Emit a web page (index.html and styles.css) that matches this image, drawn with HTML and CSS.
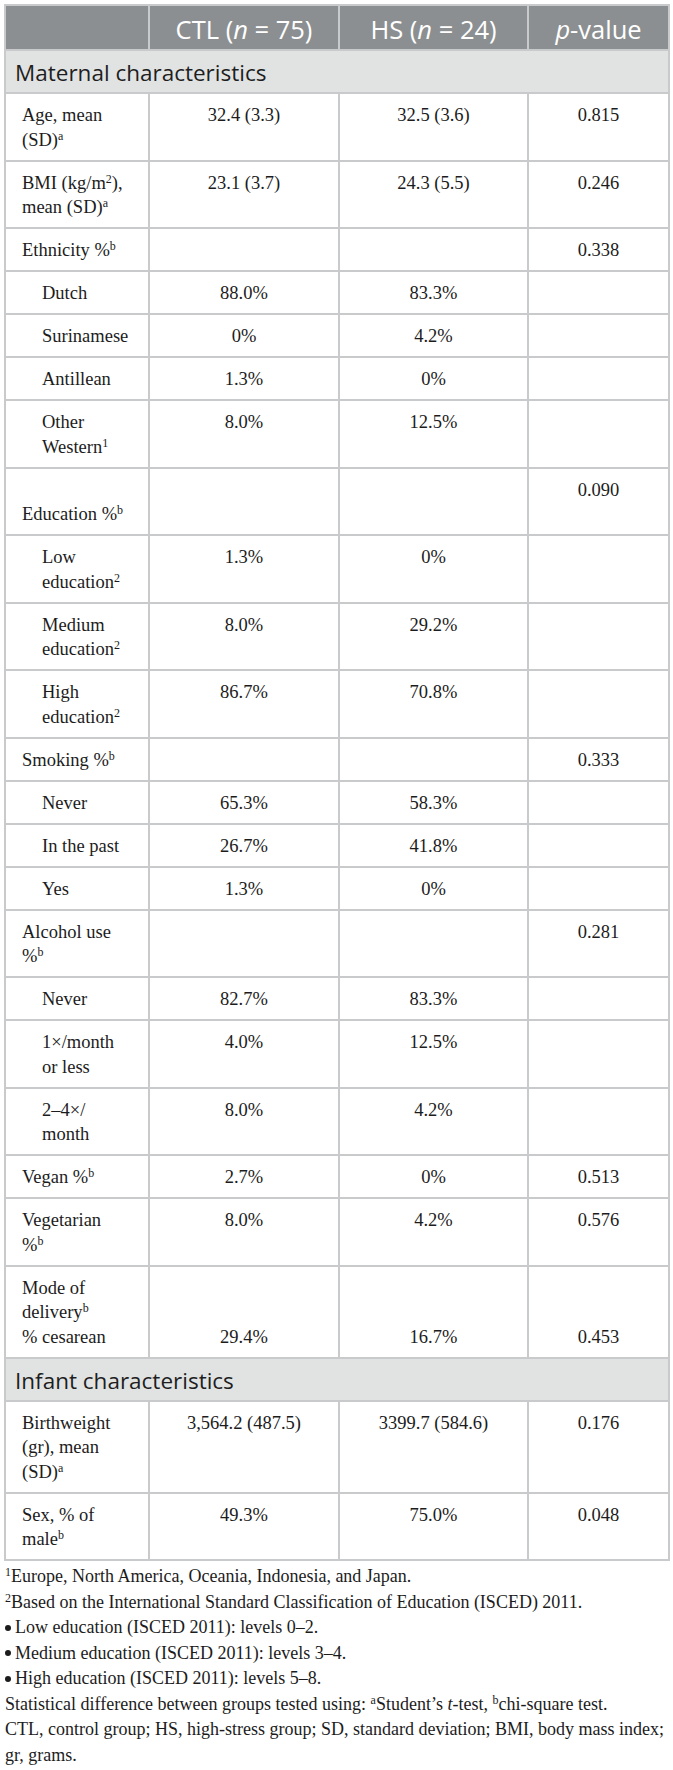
FILE: index.html
```html
<!DOCTYPE html>
<html lang="en">
<head>
    <meta charset="UTF-8">
    <title>Table 1 - Participant characteristics</title>
    <link rel="stylesheet" href="styles.css">
</head>
<body>
    <div class="wrap">
        <table class="chars">
            <colgroup>
                <col class="c-label">
                <col class="c-group">
                <col class="c-group2">
                <col class="c-p">
            </colgroup>
            <thead>
                <tr>
                    <th></th>
                    <th>CTL (<i>n</i> = 75)</th>
                    <th>HS (<i>n</i> = 24)</th>
                    <th><i>p</i>-value</th>
                </tr>
            </thead>
            <tbody>
                <tr class="section"><td colspan="4">Maternal characteristics</td></tr>
                <tr><td>Age, mean<br>(SD)<sup>a</sup></td><td>32.4 (3.3)</td><td>32.5 (3.6)</td><td>0.815</td></tr>
                <tr><td>BMI (kg/m<sup>2</sup>),<br>mean (SD)<sup>a</sup></td><td>23.1 (3.7)</td><td>24.3 (5.5)</td><td>0.246</td></tr>
                <tr><td>Ethnicity %<sup>b</sup></td><td></td><td></td><td>0.338</td></tr>
                <tr><td class="sub">Dutch</td><td>88.0%</td><td>83.3%</td><td></td></tr>
                <tr><td class="sub">Surinamese</td><td>0%</td><td>4.2%</td><td></td></tr>
                <tr><td class="sub">Antillean</td><td>1.3%</td><td>0%</td><td></td></tr>
                <tr><td class="sub">Other<br>Western<sup>1</sup></td><td>8.0%</td><td>12.5%</td><td></td></tr>
                <tr><td><br>Education %<sup>b</sup></td><td></td><td></td><td>0.090</td></tr>
                <tr><td class="sub">Low<br>education<sup>2</sup></td><td>1.3%</td><td>0%</td><td></td></tr>
                <tr><td class="sub">Medium<br>education<sup>2</sup></td><td>8.0%</td><td>29.2%</td><td></td></tr>
                <tr><td class="sub">High<br>education<sup>2</sup></td><td>86.7%</td><td>70.8%</td><td></td></tr>
                <tr><td>Smoking %<sup>b</sup></td><td></td><td></td><td>0.333</td></tr>
                <tr><td class="sub">Never</td><td>65.3%</td><td>58.3%</td><td></td></tr>
                <tr><td class="sub">In the past</td><td>26.7%</td><td>41.8%</td><td></td></tr>
                <tr><td class="sub">Yes</td><td>1.3%</td><td>0%</td><td></td></tr>
                <tr><td>Alcohol use<br>%<sup>b</sup></td><td></td><td></td><td>0.281</td></tr>
                <tr><td class="sub">Never</td><td>82.7%</td><td>83.3%</td><td></td></tr>
                <tr><td class="sub">1&times;/month<br>or less</td><td>4.0%</td><td>12.5%</td><td></td></tr>
                <tr><td class="sub">2&ndash;4&times;/<br>month</td><td>8.0%</td><td>4.2%</td><td></td></tr>
                <tr><td>Vegan %<sup>b</sup></td><td>2.7%</td><td>0%</td><td>0.513</td></tr>
                <tr><td>Vegetarian<br>%<sup>b</sup></td><td>8.0%</td><td>4.2%</td><td>0.576</td></tr>
                <tr class="bottom">
                    <td>Mode of<br>delivery<sup>b</sup><br>% cesarean</td>
                    <td>29.4%</td><td>16.7%</td><td>0.453</td>
                </tr>
                <tr class="section"><td colspan="4">Infant characteristics</td></tr>
                <tr><td>Birthweight<br>(gr), mean<br>(SD)<sup>a</sup></td><td>3,564.2 (487.5)</td><td>3399.7 (584.6)</td><td>0.176</td></tr>
                <tr><td>Sex, % of<br>male<sup>b</sup></td><td>49.3%</td><td>75.0%</td><td>0.048</td></tr>
            </tbody>
        </table>

        <div class="notes">
            <p><sup>1</sup>Europe, North America, Oceania, Indonesia, and Japan.</p>
            <p><sup>2</sup>Based on the International Standard Classification of Education (ISCED) 2011.</p>
            <p><span class="dot"></span>Low education (ISCED 2011): levels 0&ndash;2.</p>
            <p><span class="dot"></span>Medium education (ISCED 2011): levels 3&ndash;4.</p>
            <p><span class="dot"></span>High education (ISCED 2011): levels 5&ndash;8.</p>
            <p>Statistical difference between groups tested using: <sup>a</sup>Student’s <i>t</i>-test, <sup>b</sup>chi-square test.</p>
            <p>CTL, control group; HS, high-stress group; SD, standard deviation; BMI, body mass index;<br>gr, grams.</p>
        </div>
    </div>
</body>
</html>
```

FILE: styles.css
```css
body {
    margin: 0;
    background-color: #fff;
    font-family: "Liberation Serif", "Times New Roman", serif;
    color: #1c1c1c;
}
.wrap {
    padding: 4px 0 0 4px;
}
.chars {
    width: 664px;
    border-collapse: collapse;
    table-layout: fixed;
    font-size: 18.5px;
    line-height: 24.5px;
}
.c-label { width: 144px; }
.c-group { width: 190px; }
.c-group2 { width: 189px; }
.c-p { width: 141px; }
.chars th,
.chars td {
    border: 2px solid #c9cacb;
    vertical-align: top;
    text-align: center;
    padding: 9px 8px 7.5px 8px;
}
.chars th {
    background-color: #8c8f91;
    color: #fff;
    font-family: "Open Sans", "Noto Sans", sans-serif;
    font-weight: 400;
    font-size: 25.5px;
    line-height: 30px;
    padding: 7.5px 4px 5.5px 4px;
}
.chars td:first-child {
    text-align: left;
    padding-left: 16px;
}
.chars td.sub {
    padding-left: 36px;
}
.chars tr.section td {
    background-color: #e1e3e3;
    font-family: "Open Sans", "Noto Sans", sans-serif;
    font-size: 22.5px;
    line-height: 28px;
    color: #1e1e1e;
    padding: 8px 10px 5px 9px;
}
.chars tr.bottom td {
    vertical-align: bottom;
}
.chars sup,
.notes sup {
    font-size: 12px;
    line-height: 0;
    vertical-align: 6px;
}
.notes {
    font-size: 18px;
    line-height: 25.5px;
    padding: 3px 6px 0 1px;
}
.notes p {
    margin: 0;
}
.dot {
    display: inline-block;
    width: 6px;
    height: 6px;
    border-radius: 50%;
    background-color: #1c1c1c;
    margin: 0 4px 2px 0;
    vertical-align: middle;
}
```
